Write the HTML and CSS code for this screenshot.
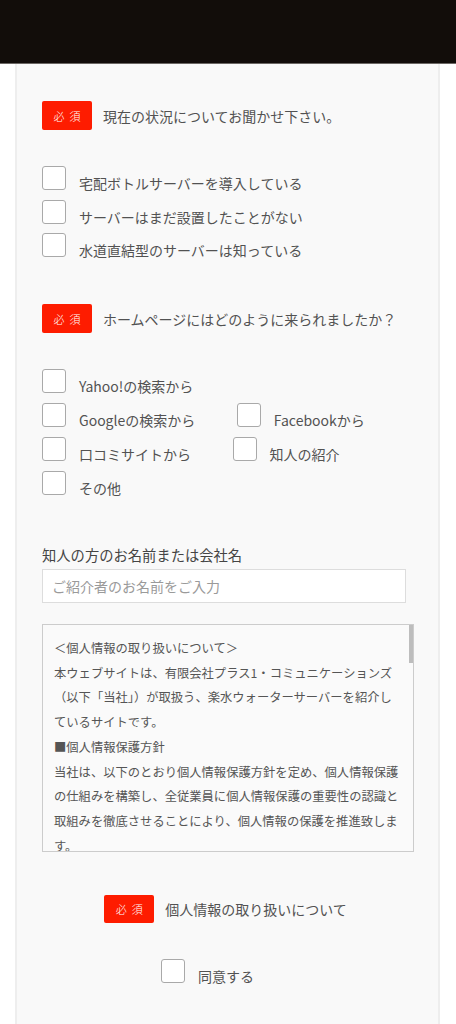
FILE: index.html
```html
<!DOCTYPE html>
<html lang="ja">
<head>
<meta charset="utf-8">
<title>お問い合わせ</title>
<link rel="stylesheet" href="styles.css">
</head>
<body>
<header class="topbar"></header>
<main class="card">
  <section class="q q-status">
    <div class="q-head">
      <span class="badge">必須</span>
      <span class="q-title">現在の状況についてお聞かせ下さい。</span>
    </div>
    <div class="opts opts-tight">
      <div class="row"><label class="opt"><span class="box"></span><span class="opt-text">宅配ボトルサーバーを導入している</span></label></div>
      <div class="row"><label class="opt"><span class="box"></span><span class="opt-text">サーバーはまだ設置したことがない</span></label></div>
      <div class="row"><label class="opt"><span class="box"></span><span class="opt-text">水道直結型のサーバーは知っている</span></label></div>
    </div>
  </section>

  <section class="q q-source">
    <div class="q-head">
      <span class="badge">必須</span>
      <span class="q-title">ホームページにはどのように来られましたか？</span>
    </div>
    <div class="opts">
      <div class="row"><label class="opt"><span class="box"></span><span class="opt-text">Yahoo!の検索から</span></label></div>
      <div class="row">
        <label class="opt"><span class="box"></span><span class="opt-text">Googleの検索から</span></label>
        <label class="opt"><span class="box"></span><span class="opt-text">Facebookから</span></label>
      </div>
      <div class="row">
        <label class="opt"><span class="box"></span><span class="opt-text">口コミサイトから</span></label>
        <label class="opt"><span class="box"></span><span class="opt-text">知人の紹介</span></label>
      </div>
      <div class="row"><label class="opt"><span class="box"></span><span class="opt-text">その他</span></label></div>
    </div>
  </section>

  <section class="field">
    <div class="field-label">知人の方のお名前または会社名</div>
    <div class="input"><span class="placeholder">ご紹介者のお名前をご入力</span></div>
  </section>

  <section class="policy">
    <div class="policy-text">
      <p>＜個人情報の取り扱いについて＞</p>
      <p>本ウェブサイトは、有限会社プラス1・コミュニケーションズ（以下「当社」）が取扱う、楽水ウォーターサーバーを紹介しているサイトです。</p>
      <p>■個人情報保護方針</p>
      <p>当社は、以下のとおり個人情報保護方針を定め、個人情報保護の仕組みを構築し、全従業員に個人情報保護の重要性の認識と取組みを徹底させることにより、個人情報の保護を推進致します。</p>
      <p>■個人情報の管理</p>
      <p>当社は、お客さまの個人情報を正確かつ最新の状態に保ち、個人情報への不正アクセス・紛失・破損・改ざん・漏洩などを防止するため、セキュリティシステムの維持・管理体制の整備・社員教育の徹底等の必要な措置を講じ、安全対策を実施し個人情報の厳重な管理を行ないます。</p>
    </div>
    <span class="scroll-thumb"></span>
  </section>

  <section class="agree">
    <div class="q-head q-head-center">
      <span class="badge">必須</span>
      <span class="q-title">個人情報の取り扱いについて</span>
    </div>
    <div class="agree-row">
      <label class="opt"><span class="box"></span><span class="opt-text">同意する</span></label>
    </div>
  </section>
</main>
</body>
</html>
```

FILE: styles.css
```css
* {
  box-sizing: border-box;
}

html, body {
  margin: 0;
  padding: 0;
  background: #ffffff;
}

body {
  font-family: "Noto Sans CJK JP", "Noto Sans", sans-serif;
  color: #555555;
  font-size: 14px;
}

.topbar {
  height: 64px;
  background: #120d0a;
  border-bottom: 1px solid #6b6764;
}

.card {
  margin: 0 16px 0 15px;
  min-height: 1000px;
  background: #f9f9f9;
  border-left: 2px solid #eeeeee;
  border-right: 2px solid #eeeeee;
  padding: 37px 24px 40px 25px;
}

.q-head {
  display: flex;
  align-items: center;
  gap: 11px;
}

.q-head-center {
  justify-content: center;
  padding-right: 5px;
}

.badge {
  display: flex;
  align-items: center;
  justify-content: center;
  width: 50px;
  height: 29px;
  padding-left: 5px;
  background: #fe1c00;
  border-radius: 2px;
  color: #ffffff;
  font-size: 11px;
  letter-spacing: 5px;
  font-weight: 300;
}

.q-title {
  font-size: 14px;
  line-height: 20px;
  color: #525252;
}

.opts {
  margin-top: 36px;
  display: flex;
  flex-direction: column;
  gap: 10px;
}

.opts-tight {
  gap: 9.5px;
}

.row {
  display: flex;
  gap: 41.5px;
}

.opt {
  display: flex;
  align-items: flex-start;
  gap: 13px;
}

.box {
  flex: none;
  width: 24px;
  height: 24px;
  background: #ffffff;
  border: 1px solid #a9a9a9;
  border-radius: 3px;
}

.opt-text {
  padding-top: 10px;
  font-size: 14px;
  line-height: 14px;
  color: #525252;
  white-space: nowrap;
}

.q-source {
  margin-top: 47px;
}

.field {
  margin-top: 49px;
}

.field-label {
  font-size: 14.3px;
  line-height: 22px;
  color: #444444;
  margin-bottom: 3px;
}

.input {
  height: 34px;
  margin-right: 8px;
  background: #ffffff;
  border: 1px solid #dddddd;
  padding: 0 9px;
  display: flex;
  align-items: center;
}

.placeholder {
  font-size: 14px;
  color: #9a9a9a;
}

.policy {
  position: relative;
  margin-top: 21px;
  height: 228px;
  border: 1px solid #cccccc;
  background: #fafafa;
  overflow: hidden;
}

.policy-text {
  padding: 11px 12px 0 11px;
  font-size: 12.3px;
  line-height: 24.7px;
  color: #555555;
}

.policy-text p {
  margin: 0;
}

.scroll-thumb {
  position: absolute;
  top: 0;
  right: 0;
  width: 4px;
  height: 38px;
  background: #bdbdbd;
}

.agree {
  margin-top: 43px;
}

.agree .badge {
  height: 28px;
}

.agree-row {
  margin-top: 36px;
  display: flex;
  justify-content: center;
}

.agree-row .opt {
  margin-right: 41px;
}
```
